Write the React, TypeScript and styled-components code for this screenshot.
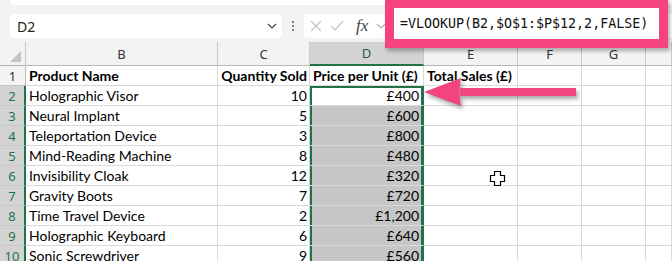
import React from "react";
import styled, { createGlobalStyle } from "styled-components";

const GlobalStyle = createGlobalStyle`
  html, body { margin: 0; padding: 0; background: #f3f3f3; }
  * { box-sizing: border-box; }
`;

const Screen = styled.div`
  position: relative;
  width: 672px;
  height: 261px;
  overflow: hidden;
  background: #f3f3f3;
  font-family: "Noto Sans", "Open Sans", sans-serif;
`;

const TopStrip = styled.div`
  height: 5px;
  margin-left: 10px;
  background: #ffffff;
  border-bottom-left-radius: 5px;
`;

const FormulaRow = styled.div`
  display: flex;
  align-items: center;
  height: 37px;
  padding: 9px 0 4px 10px;
`;

const NameBox = styled.div`
  display: flex;
  align-items: center;
  justify-content: space-between;
  width: 272px;
  height: 24px;
  padding: 0 4px 0 7px;
  background: #ffffff;
  border-radius: 4px;
  font-size: 14px;
  color: #222;
`;

const Dots = styled.div`
  display: flex;
  flex-direction: column;
  gap: 2px;
  width: 22px;
  align-items: center;
  span {
    width: 2px;
    height: 2px;
    background: #555;
    border-radius: 1px;
  }
`;

const FxBox = styled.div`
  display: flex;
  align-items: center;
  flex: 1;
  height: 24px;
  padding-left: 6px;
  gap: 8px;
  background: #ffffff;
  border-radius: 4px 0 0 4px;
`;

const Fx = styled.span`
  font-family: "Liberation Serif", serif;
  font-style: italic;
  font-size: 17px;
  color: #444;
  margin-left: 4px;
`;

const Grid = styled.div`
  display: grid;
  grid-template-columns: 26px 192px 92px 114px 94px 64px 64px 1fr;
  grid-auto-rows: 20px;
  grid-template-rows: 24px;
  background: #ffffff;
`;

const ColHead = styled.div<{ $sel?: boolean }>`
  display: flex;
  align-items: center;
  justify-content: center;
  font-family: "Noto Sans", sans-serif;
  font-size: 13px;
  color: ${(p) => (p.$sel ? "#1f5c38" : "#333")};
  background: ${(p) => (p.$sel ? "#d3d3d3" : "#f3f3f3")};
  border-right: 1px solid #c8c8c8;
  border-bottom: ${(p) => (p.$sel ? "2px solid #217346" : "1px solid #b8b8b8")};
`;

const Corner = styled.div`
  position: relative;
  background: #f3f3f3;
  border-right: 1px solid #c8c8c8;
  border-bottom: 1px solid #b8b8b8;
  &::after {
    content: "";
    position: absolute;
    right: 4px;
    bottom: 3px;
    border-left: 11px solid transparent;
    border-bottom: 11px solid #c4c4c4;
  }
`;

const RowHead = styled.div<{ $sel?: boolean }>`
  display: flex;
  align-items: center;
  justify-content: center;
  font-family: "Noto Sans", sans-serif;
  font-size: 13px;
  color: ${(p) => (p.$sel ? "#217346" : "#333")};
  background: ${(p) => (p.$sel ? "#d3d3d3" : "#f3f3f3")};
  border-bottom: 1px solid #c8c8c8;
  border-right: ${(p) => (p.$sel ? "2px solid #217346" : "1px solid #b8b8b8")};
`;

const Cell = styled.div<{
  $align?: "left" | "right";
  $bold?: boolean;
  $fill?: boolean;
  $selTop?: boolean;
  $selSide?: boolean;
}>`
  display: flex;
  align-items: center;
  justify-content: ${(p) => (p.$align === "right" ? "flex-end" : "flex-start")};
  padding: 0 2px 0 3px;
  font-family: "Lato", "Open Sans", sans-serif;
  font-size: 14px;
  font-weight: ${(p) => (p.$bold ? 700 : 400)};
  color: #000;
  white-space: nowrap;
  overflow: visible;
  background: ${(p) => (p.$fill ? "#c6c6c6" : "#ffffff")};
  border-right: 1px solid #d9d9d9;
  border-bottom: 1px solid #d9d9d9;
  box-shadow: ${(p) =>
    p.$selSide
      ? `inset 2px 0 0 #217346, inset -2px 0 0 #217346${p.$selTop ? ", inset 0 2px 0 #217346" : ""}`
      : "none"};
  ${(p) => p.$selSide && "padding-right: 4px; border-right-color: #217346;"}
`;

const Callout = styled.div`
  position: absolute;
  left: 385px;
  top: -2px;
  width: 283px;
  height: 50px;
  padding: 10px 9px 9px 9px;
  background: #f4437d;
  box-shadow: 2px 3px 4px rgba(0, 0, 0, 0.3);
`;

const CalloutText = styled.div`
  height: 100%;
  display: flex;
  align-items: center;
  padding-left: 6px;
  background: #ffffff;
  font-family: "DejaVu Sans Mono", monospace;
  font-size: 13.3px;
  color: #111;
  white-space: nowrap;
`;

const Arrow = styled.svg`
  position: absolute;
  left: 420px;
  top: 74px;
  filter: drop-shadow(2px 3px 2px rgba(0, 0, 0, 0.35));
`;

const Pointer = styled.svg`
  position: absolute;
  left: 489px;
  top: 170px;
`;

const rows: [string, number, string][] = [
  ["Holographic Visor", 10, "£400"],
  ["Neural Implant", 5, "£600"],
  ["Teleportation Device", 3, "£800"],
  ["Mind-Reading Machine", 8, "£480"],
  ["Invisibility Cloak", 12, "£320"],
  ["Gravity Boots", 7, "£720"],
  ["Time Travel Device", 2, "£1,200"],
  ["Holographic Keyboard", 6, "£640"],
  ["Sonic Screwdriver", 9, "£560"],
];

const cols = ["B", "C", "D", "E", "F", "G", ""];

export default function App() {
  return (
    <Screen>
      <GlobalStyle />
      <TopStrip />
      <FormulaRow>
        <NameBox>
          <span>D2</span>
          <svg width="12" height="12" viewBox="0 0 12 12">
            <path d="M2 4l4 4 4-4" stroke="#444" strokeWidth="1.2" fill="none" />
          </svg>
        </NameBox>
        <Dots>
          <span />
          <span />
          <span />
        </Dots>
        <FxBox>
          <svg width="12" height="12" viewBox="0 0 12 12">
            <path d="M1 1l10 10M11 1L1 11" stroke="#c2c2c2" strokeWidth="1.2" />
          </svg>
          <svg width="14" height="12" viewBox="0 0 14 12">
            <path d="M1 6l4 4 8-9" stroke="#c2c2c2" strokeWidth="1.2" fill="none" />
          </svg>
          <Fx>fx</Fx>
          <svg width="10" height="10" viewBox="0 0 10 10">
            <path d="M1 3l4 4 4-4" stroke="#b0b0b0" strokeWidth="1.1" fill="none" />
          </svg>
        </FxBox>
      </FormulaRow>

      <Grid>
        <Corner />
        {cols.map((c, i) => (
          <ColHead key={i} $sel={c === "D"}>
            {c}
          </ColHead>
        ))}

        <RowHead>1</RowHead>
        <Cell $bold>Product Name</Cell>
        <Cell $bold $align="right">Quantity Sold</Cell>
        <Cell $bold>Price per Unit (£)</Cell>
        <Cell $bold>Total Sales (£)</Cell>
        <Cell />
        <Cell />
        <Cell />

        {rows.map(([name, qty, price], i) => (
          <React.Fragment key={name}>
            <RowHead $sel>{i + 2}</RowHead>
            <Cell>{name}</Cell>
            <Cell $align="right">{qty}</Cell>
            <Cell $align="right" $fill={i > 0} $selSide $selTop={i === 0}>
              {price}
            </Cell>
            <Cell />
            <Cell />
            <Cell />
            <Cell />
          </React.Fragment>
        ))}
      </Grid>

      <Callout>
        <CalloutText>=VLOOKUP(B2,$O$1:$P$12,2,FALSE)</CalloutText>
      </Callout>

      <Arrow width="165" height="40" viewBox="0 0 165 40">
        <path
          d="M4 18 L41 4 Q38 18 41 32 Z M40 14 L156 14 L156 22 L40 22 Z"
          fill="#f2457e"
        />
      </Arrow>

      <Pointer width="18" height="18" viewBox="0 0 18 18">
        <path
          d="M5.5 1.5h6v4h4v6h-4v4h-6v-4h-4v-6h4z"
          fill="#ffffff"
          stroke="#000"
          strokeWidth="1.2"
        />
      </Pointer>
    </Screen>
  );
}
